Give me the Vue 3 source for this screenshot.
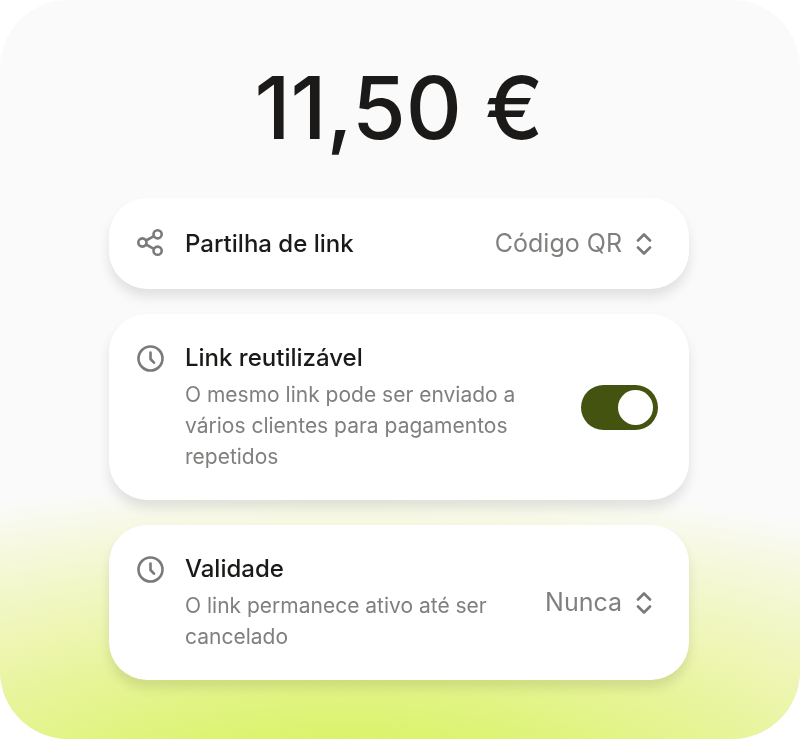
<script setup>
import { ref } from 'vue';

const amount = '11,50 €';

const shareMethod = ref('Código QR');
const shareOptions = ['Código QR', 'E-mail', 'SMS'];

const reusable = ref(true);

const validity = ref('Nunca');
const validityOptions = ['Nunca', '24 horas', '7 dias'];
</script>

<template>
  <main class="payment-link">
    <svg class="grain" aria-hidden="true">
      <filter id="grain-filter">
        <feTurbulence type="fractalNoise" baseFrequency="0.7" numOctaves="2" />
        <feColorMatrix type="saturate" values="0" />
      </filter>
      <rect width="100%" height="100%" filter="url(#grain-filter)" />
    </svg>

    <h1 class="amount">{{ amount }}</h1>

    <div class="card-list">
      <section class="card">
        <svg class="card-icon" viewBox="0 0 27 27">
          <circle cx="5.4" cy="13.5" r="4.1" />
          <circle cx="20.6" cy="5.3" r="4.1" />
          <circle cx="20.6" cy="21.7" r="4.1" />
          <path d="M9 11.5l8-4.3M9 15.5l8 4.3" />
        </svg>
        <div class="card-text">
          <label class="card-title" for="share-method">Partilha de link</label>
        </div>
        <div class="picker">
          <select id="share-method" v-model="shareMethod">
            <option v-for="option in shareOptions" :key="option">{{ option }}</option>
          </select>
          <svg class="chevrons" viewBox="0 0 16 22">
            <path d="M2 7.5l6-6 6 6M2 14.5l6 6 6-6" />
          </svg>
        </div>
      </section>

      <section class="card">
        <svg class="card-icon" viewBox="0 0 27 27">
          <circle cx="13.5" cy="13.5" r="12" />
          <path d="M13.5 7.5v6.5l3.5 3.7" />
        </svg>
        <div class="card-text">
          <label class="card-title" for="reusable">Link reutilizável</label>
          <p id="reusable-info" class="card-info">
            O mesmo link pode ser enviado a vários clientes para pagamentos repetidos
          </p>
        </div>
        <input
          id="reusable"
          v-model="reusable"
          class="toggle"
          type="checkbox"
          role="switch"
          aria-describedby="reusable-info"
        />
      </section>

      <section class="card">
        <svg class="card-icon" viewBox="0 0 27 27">
          <circle cx="13.5" cy="13.5" r="12" />
          <path d="M13.5 7.5v6.5l3.5 3.7" />
        </svg>
        <div class="card-text">
          <label class="card-title" for="validity">Validade</label>
          <p id="validity-info" class="card-info">O link permanece ativo até ser cancelado</p>
        </div>
        <div class="picker">
          <select id="validity" v-model="validity" aria-describedby="validity-info">
            <option v-for="option in validityOptions" :key="option">{{ option }}</option>
          </select>
          <svg class="chevrons" viewBox="0 0 16 22">
            <path d="M2 7.5l6-6 6 6M2 14.5l6 6 6-6" />
          </svg>
        </div>
      </section>
    </div>
  </main>
</template>

<style>
body {
  background: #ffffff;
}
</style>

<style scoped>
.payment-link {
  position: relative;
  isolation: isolate;
  box-sizing: border-box;
  min-height: 100vh;
  padding: 56px 25px 59px 23px;
  overflow: hidden;
  border-radius: 68px;
  background:
    radial-gradient(
      ellipse 115% 42% at 43% 107%,
      #d6f45c 0%,
      #daf36c 20%,
      #e6f493 44%,
      #eff6b8 64%,
      #f5f8d8 82%,
      #fafafa 100%
    ),
    #fafafa;
  font-family: Inter, "Noto Sans", sans-serif;
  color: #1b1a19;
}

/* fine noise, only over the green glow */
.grain {
  position: absolute;
  inset: 0;
  z-index: -1;
  width: 100%;
  height: 100%;
  opacity: 0.3;
  mix-blend-mode: soft-light;
  mask-image: linear-gradient(transparent 72%, #000 90%);
}

.amount {
  margin: 0 0 38px;
  font-size: 87px;
  line-height: 104px;
  font-weight: 500;
  text-align: center;
}

.card-list {
  display: flex;
  flex-direction: column;
  gap: 25px;
  max-width: 580px;
  margin: 0 auto;
}

.card {
  display: flex;
  align-items: center;
  padding: 28px 31px 28px 28px;
  border-radius: 38px;
  background: #ffffff;
  box-shadow: 0 8px 12px rgba(0, 0, 0, 0.1);
}

.card-icon {
  flex: none;
  align-self: flex-start;
  width: 27px;
  height: 33px;
  margin-right: 21px;
  fill: none;
  stroke: #7a7a78;
  stroke-width: 2.6;
  stroke-linecap: round;
  stroke-linejoin: round;
}

.card-text {
  flex: 1;
  min-width: 0;
}

.card-title {
  display: block;
  font-size: 24px;
  line-height: 32px;
  font-weight: 500;
}

.card-info {
  max-width: 344px;
  margin: 5px 0 0;
  font-size: 21px;
  line-height: 31px;
  color: #7f7f7d;
}

.picker {
  display: flex;
  align-items: center;
  gap: 14px;
  padding-right: 6px;
  color: #7f7f7d;
}

.picker select {
  field-sizing: content;
  appearance: none;
  margin: 0;
  padding: 0;
  border: 0;
  background: transparent;
  color: inherit;
  font-family: inherit;
  font-size: 25px;
  line-height: 35px;
  cursor: pointer;
}

.chevrons {
  flex: none;
  width: 16px;
  height: 22px;
  fill: none;
  stroke: #7a7a78;
  stroke-width: 2.6;
  stroke-linecap: round;
  stroke-linejoin: round;
  pointer-events: none;
}

.toggle {
  flex: none;
  appearance: none;
  box-sizing: border-box;
  display: flex;
  width: 77px;
  height: 45px;
  margin: 0;
  padding: 5px;
  border-radius: 23px;
  background: #b9b9b5;
  cursor: pointer;
}

.toggle::before {
  content: "";
  width: 35px;
  height: 35px;
  border-radius: 50%;
  background: #ffffff;
}

.toggle:checked {
  justify-content: flex-end;
  background: #445310;
}
</style>
